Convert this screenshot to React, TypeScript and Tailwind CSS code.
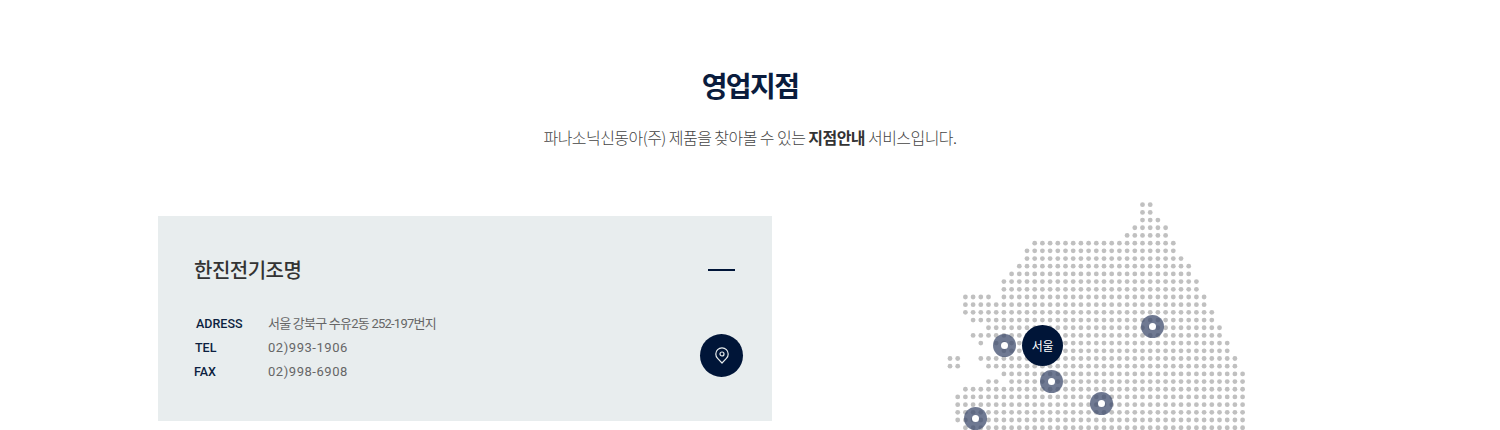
const NAVY = "#001538";

// each row: list of [from, to] column ranges of the dot map
const mapRows: [number, number][][] = [
  [[25, 26]],
  [[25, 26]],
  [[25, 27]],
  [[24, 28]],
  [[23, 28]],
  [[11, 29]],
  [[10, 29]],
  [[10, 30]],
  [[9, 31]],
  [[8, 31]],
  [[7, 32]],
  [[7, 32]],
  [[2, 5], [7, 33]],
  [[2, 33]],
  [[2, 34]],
  [[3, 34]],
  [[5, 35]],
  [[3, 35]],
  [[4, 4], [6, 36]],
  [[7, 36]],
  [[0, 1], [4, 37]],
  [[0, 1], [5, 37]],
  [[7, 38]],
  [[5, 6], [8, 38]],
  [[2, 38]],
  [[1, 38]],
  [[1, 38]],
  [[1, 38]],
  [[1, 38]],
  [[2, 38]],
];

const branches = [
  { left: "left-[48px]", top: "top-[134px]" },
  { left: "left-[196px]", top: "top-[115px]" },
  { left: "left-[95px]", top: "top-[170px]" },
  { left: "left-[145px]", top: "top-[192px]" },
  { left: "left-[19px]", top: "top-[207px]" },
];

function DotMap() {
  return (
    <svg width="305" height="240" viewBox="0 0 305 240" className="block">
      {mapRows.map((ranges, r) =>
        ranges.map(([from, to]) =>
          Array.from({ length: to - from + 1 }, (_, i) => (
            <circle
              key={`${r}-${from + i}`}
              cx={5 + 7.7 * (from + i)}
              cy={4.7 + 7.69 * r}
              r="2.4"
              fill="#c0c0c0"
            />
          ))
        )
      )}
    </svg>
  );
}

function InfoRow({
  label,
  value,
  labelClass,
  valueClass,
}: {
  label: string;
  value: string;
  labelClass?: string;
  valueClass?: string;
}) {
  return (
    <div className="flex h-6 items-center">
      <span className={`w-[73px] font-['Roboto',sans-serif] text-[12.5px] font-medium text-[#0c1f40] ${labelClass ?? ""}`}>
        {label}
      </span>
      <span className={`font-['Roboto','Noto_Sans_CJK_KR',sans-serif] text-[13px] text-[#666] ${valueClass ?? "tracking-[0.55px]"}`}>
        {value}
      </span>
    </div>
  );
}

export default function App() {
  return (
    <div className="h-[430px] w-[1500px] overflow-hidden bg-white font-['Noto_Sans_CJK_KR',sans-serif]">
      <div className="flex h-[200px] flex-col items-center pt-[65px]">
        <h2 className="text-[28px] leading-10 font-bold tracking-[-1.6px] text-[#0a1c3d]">영업지점</h2>
        <p className="mt-5 text-[16px] leading-6 font-light tracking-[-0.55px] text-[#444]">
          파나소닉신동아(주) 제품을 찾아볼 수 있는 <b className="font-bold text-[#333]">지점안내</b> 서비스입니다.
        </p>
      </div>

      <div className="flex items-start pl-[158px]">
        <div className="mt-4 flex h-[205px] w-[614px] flex-col bg-[#e8edee] pt-[38px] pr-[29px] pl-[37px]">
          <div className="flex items-center justify-between">
            <h3 className="-ml-px text-[20px] leading-8 font-medium tracking-[-0.5px] text-[#333]">한진전기조명</h3>
            <span className="mr-2 h-0.5 w-[27px]" style={{ backgroundColor: NAVY }} />
          </div>
          <div className="mt-[26px] flex items-center justify-between">
            <div>
              <InfoRow label="ADRESS" value="서울 강북구 수유2동 252-197번지" valueClass="-ml-px tracking-[-0.77px]" labelClass="ml-px" />
              <InfoRow label="TEL" value="02)993-1906" />
              <InfoRow label="FAX" value="02)998-6908" labelClass="-ml-px" valueClass="ml-px tracking-[0.55px]" />
            </div>
            <button className="mt-3.5 flex h-[43px] w-[43px] items-center justify-center rounded-full bg-[#001538]">
              <svg width="14" height="17" viewBox="0 0 14 17" fill="none" stroke="#e8edee" strokeWidth="1.2">
                <path d="M7 16 2.6 11.4A6.2 6.2 0 1 1 11.4 11.4Z" strokeLinejoin="round" />
                <circle cx="7" cy="7" r="2" />
              </svg>
            </button>
          </div>
        </div>

        <div className="relative ml-[173px] h-[240px] w-[305px]">
          <DotMap />
          {branches.map((b, i) => (
            <span
              key={i}
              className={`absolute ${b.left} ${b.top} flex h-[23px] w-[23px] items-center justify-center rounded-full bg-[#3f4c6e]/75`}
            >
              <span className="h-[7px] w-[7px] rounded-full bg-white" />
            </span>
          ))}
          <span className="absolute top-[125px] left-[77px] flex h-[41px] w-[41px] items-center justify-center rounded-full bg-[#001538] text-[12px] tracking-[-0.3px] text-white">
            서울
          </span>
        </div>
      </div>
    </div>
  );
}
